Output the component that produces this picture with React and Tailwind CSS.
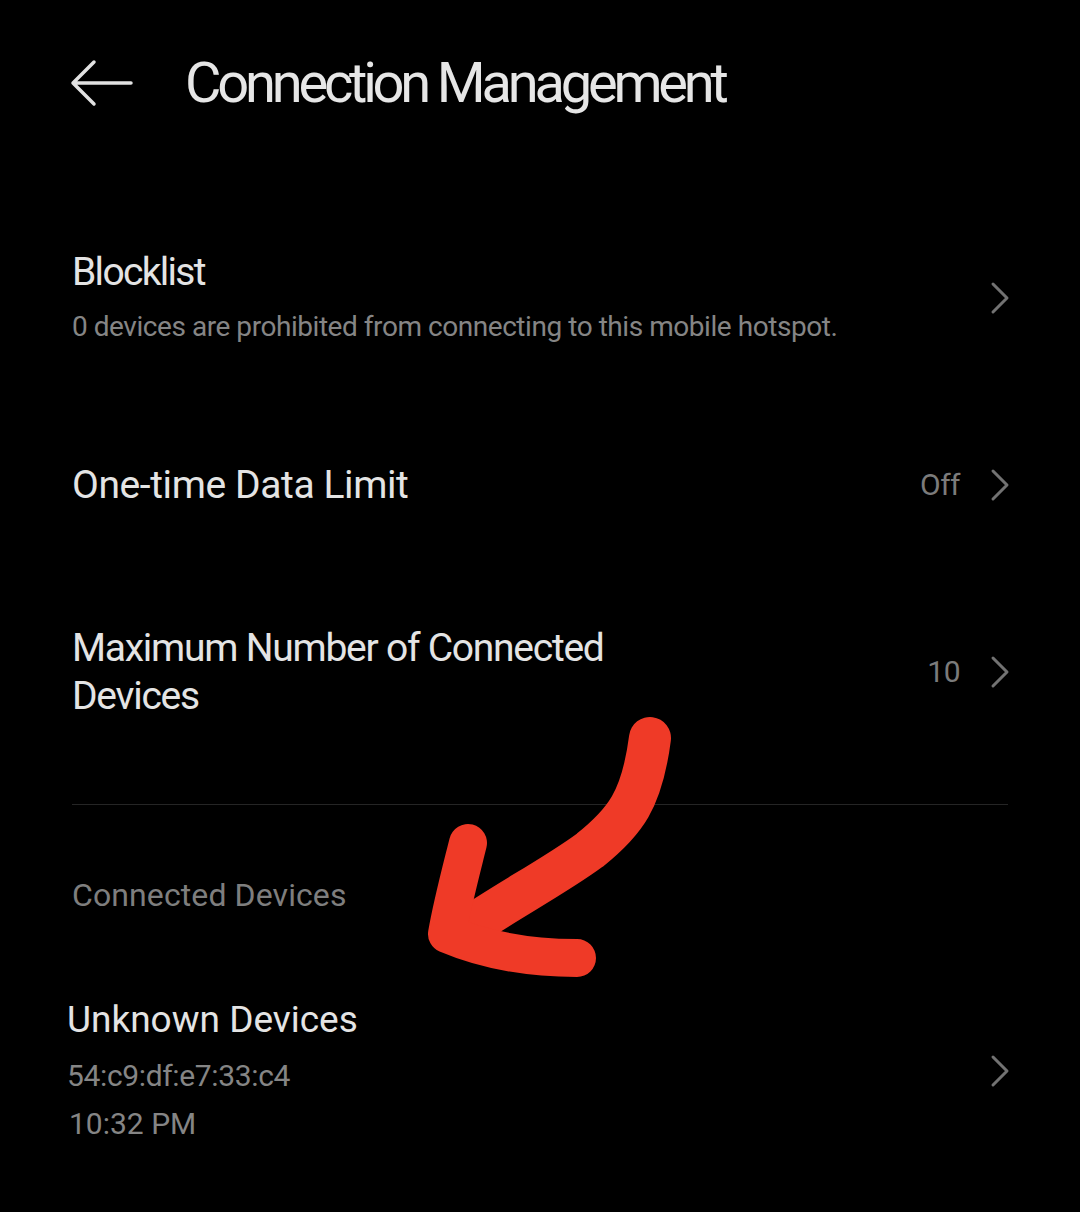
import React from 'react';

const FONT = { fontFamily: 'Roboto, "Noto Sans", sans-serif' };

// ── Icons ─────────────────────────────────────────────────────────────────────
function BackArrow() {
  return (
    <svg width="64" height="48" viewBox="0 0 64 48" fill="none">
      <path d="M61 24H3M24 3L3 24l21 21" stroke="#e2e2e2" strokeWidth="3.5" strokeLinecap="round" strokeLinejoin="round" />
    </svg>
  );
}

function Chevron() {
  return (
    <svg width="20" height="34" viewBox="0 0 20 34" fill="none" className="flex-shrink-0">
      <path d="M3 3l14 14L3 31" stroke="#727272" strokeWidth="3" strokeLinecap="round" strokeLinejoin="round" />
    </svg>
  );
}

// ── Settings Row ──────────────────────────────────────────────────────────────
function Row({ className = '', value, children }) {
  return (
    <div className={`flex items-center justify-between pl-[72px] pr-[70px] ${className}`}>
      <div className="min-w-0">{children}</div>
      <div className="flex items-center gap-[30px]">
        {value && <span className="text-[30px] leading-[40px] text-[#7b7b7b] tracking-[-0.5px]">{value}</span>}
        <Chevron />
      </div>
    </div>
  );
}

export default function App() {
  return (
    <div className="relative w-[1080px] h-[1212px] bg-black overflow-hidden text-[#e4e4e4]" style={FONT}>
      {/* Header */}
      <div className="h-[166px] flex items-center pl-[70px]">
        <BackArrow />
        <h1 className="ml-[51px] text-[56px] leading-[64px] font-normal tracking-[-4.2px] text-[#e6e6e6]">
          Connection Management
        </h1>
      </div>

      {/* Blocklist */}
      <Row className="pt-[82px]">
        <p className="text-[39px] leading-[48px] tracking-[-1.7px]">Blocklist</p>
        <p className="mt-[11px] text-[28px] leading-[40px] tracking-[-0.45px] text-[#858585]">
          0 devices are prohibited from connecting to this mobile hotspot.
        </p>
      </Row>

      {/* One-time Data Limit */}
      <Row className="mt-[114px]" value="Off">
        <p className="text-[39px] leading-[48px] tracking-[-0.4px]">One-time Data Limit</p>
      </Row>

      {/* Max devices */}
      <Row className="mt-[115px]" value="10">
        <p className="text-[39px] leading-[48px] tracking-[-1.25px] w-[560px]">
          Maximum Number of Connected Devices
        </p>
      </Row>

      {/* Divider */}
      <div className="mt-[84px] ml-[72px] mr-[72px] h-px bg-[#252525]" />

      {/* Connected Devices */}
      <p className="mt-[70px] pl-[72px] text-[32px] leading-[40px] tracking-[0.1px] text-[#7e7e7e]">
        Connected Devices
      </p>

      <div className="mt-[82px] flex items-center justify-between pl-[67px] pr-[70px]">
        <div>
          <p className="text-[37px] leading-[46px] text-[#e4e4e4]">Unknown Devices</p>
          <p className="mt-[13px] text-[30px] leading-[40px] tracking-[-0.35px] text-[#858585]">54:c9:df:e7:33:c4</p>
          <p className="mt-[8px] ml-[2px] text-[30px] leading-[40px] text-[#858585]">10:32 PM</p>
        </div>
        <Chevron />
      </div>

      {/* Red annotation arrow */}
      <svg className="absolute left-0 top-0 pointer-events-none" width="1080" height="1212" viewBox="0 0 1080 1212" fill="none">
        <path
          d="M650 738C642 800 625 822 590 850C555 876 500 905 462 932"
          stroke="#ef3a27" strokeWidth="42" strokeLinecap="round" strokeLinejoin="round"
        />
        <path
          d="M468 843C460 875 452 905 447 934C480 948 520 958 577 958"
          stroke="#ef3a27" strokeWidth="38" strokeLinecap="round" strokeLinejoin="round"
        />
      </svg>
    </div>
  );
}
